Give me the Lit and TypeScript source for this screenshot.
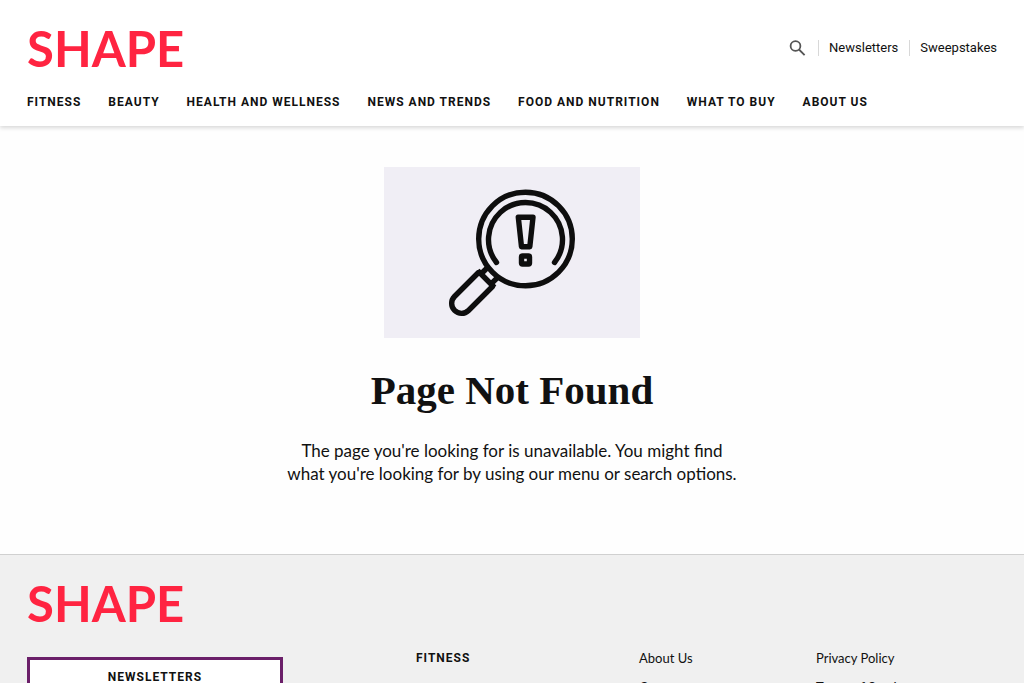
import { LitElement, html, css, svg } from "lit";
import { customElement, property } from "lit/decorators.js";

const SECTIONS = [
  "Fitness",
  "Beauty",
  "Health and Wellness",
  "News and Trends",
  "Food and Nutrition",
  "What to Buy",
  "About Us",
];
const UTILITY = ["Newsletters", "Sweepstakes"];
const COMPANY = ["About Us", "Careers"];
const LEGAL = ["Privacy Policy", "Terms of Service"];

@customElement("shape-logo")
export class ShapeLogo extends LitElement {
  static styles = css`
    :host {
      display: block;
    }
    .logo {
      display: block;
      color: #ff2441;
      font: 700 49px/42px Lato, sans-serif;
      text-decoration: none;
    }
  `;
  render() {
    return html`<a class="logo" href="#">SHAPE</a>`;
  }
}

@customElement("shape-header")
export class ShapeHeader extends LitElement {
  static styles = css`
    :host {
      display: block;
      background: #fff;
      box-shadow: 0 2px 4px rgba(0, 0, 0, 0.15);
    }
    .top {
      display: flex;
      align-items: center;
      justify-content: space-between;
      padding: 27px 27px 0;
    }
    .utility {
      display: flex;
      align-items: center;
    }
    .search {
      display: flex;
      padding: 0;
      margin-right: 12px;
      border: 0;
      background: none;
      cursor: pointer;
    }
    .utility-link {
      padding-left: 10px;
      margin-left: 11px;
      border-left: 1px solid #d8d8d8;
      color: #111;
      font-family: Roboto, sans-serif;
      font-size: 13px;
      line-height: 16px;
      text-decoration: none;
    }
    .search + .utility-link {
      margin-left: 0;
    }
    .nav {
      display: flex;
      flex-wrap: wrap;
      gap: 8px 27px;
      padding: 25px 27px 16px;
    }
    .nav-link {
      color: #111;
      font-family: Roboto, sans-serif;
      font-size: 12px;
      font-weight: 700;
      line-height: 16px;
      letter-spacing: 1px;
      text-transform: uppercase;
      text-decoration: none;
    }
  `;
  render() {
    return html`
      <div class="top">
        <shape-logo></shape-logo>
        <div class="utility">
          <button class="search" type="button" aria-label="Search">
            <svg width="17" height="17" viewBox="0 0 17 17" fill="none" stroke="#555" stroke-width="1.8">
              <circle cx="6.5" cy="6" r="4.9" />
              <path d="M10 9.5 L15.6 15.1" />
            </svg>
          </button>
          ${UTILITY.map((t) => html`<a class="utility-link" href="#">${t}</a>`)}
        </div>
      </div>
      <nav class="nav">${SECTIONS.map((t) => html`<a class="nav-link" href="#">${t}</a>`)}</nav>
    `;
  }
}

const magnifier = svg`
  <rect width="256" height="171" fill="#f0eef5" />
  <g fill="none" stroke="#0e0e0e" stroke-width="5.4" stroke-linecap="round" stroke-linejoin="round">
    <circle cx="141.5" cy="72" r="46.8" />
    <path d="M112.5 95.5 A37 37 0 1 1 170.5 95.5" />
    <path d="M134.3 50.3 H149 L145.8 79.8 H137.5 Z" />
    <rect x="137.5" y="89" width="8" height="8" rx="1" />
    <path d="M94.5 105.5 L70.5 129.5 A9.9 9.9 0 0 0 84.5 143.5 L108.5 119.5" />
    <path d="M95.5 105.5 L108.5 118.5 M103 101 L99.5 104.5 M113 111 L109.5 114.5" stroke-linecap="square" />
  </g>`;

@customElement("not-found")
export class NotFound extends LitElement {
  static styles = css`
    :host {
      display: flex;
      flex-direction: column;
      align-items: center;
      padding: 41px 27px 69px;
      text-align: center;
      color: #111;
    }
    .art {
      display: block;
      width: 256px;
    }
    .title {
      margin: 24px 0 21px;
      font: 700 41px/56px "Liberation Serif", serif;
    }
    .message {
      max-width: 456px;
      margin: 0;
      font-size: 17px;
      line-height: 23px;
    }
  `;
  render() {
    return html`
      <svg class="art" viewBox="0 0 256 171" aria-hidden="true">${magnifier}</svg>
      <h1 class="title">Page Not Found</h1>
      <p class="message">
        The page you're looking for is unavailable. You might find what you're looking for by using our menu or search
        options.
      </p>
    `;
  }
}

@customElement("link-column")
export class LinkColumn extends LitElement {
  @property({ attribute: false }) links: string[] = [];
  @property({ type: Boolean }) strong = false;

  static styles = css`
    :host {
      display: block;
    }
    .list {
      display: grid;
      gap: 13px;
      margin: 0;
      padding: 0;
      list-style: none;
    }
    .link {
      display: block;
      color: #111;
      font-size: 13px;
      line-height: 16px;
      text-decoration: none;
    }
    .strong {
      font-family: Roboto, sans-serif;
      font-size: 12px;
      font-weight: 700;
      letter-spacing: 1px;
      text-transform: uppercase;
    }
  `;
  render() {
    return html`<ul class="list">
      ${this.links.map((t) => html`<li><a class="link ${this.strong ? "strong" : ""}" href="#">${t}</a></li>`)}
    </ul>`;
  }
}

@customElement("shape-footer")
export class ShapeFooter extends LitElement {
  static styles = css`
    :host {
      display: block;
      padding: 27px;
      border-top: 1px solid #d0d0d0;
      background: #f0f0f0;
    }
    .columns {
      display: grid;
      grid-template-columns: 389fr 223fr 177fr 181fr;
      margin-top: 26px;
    }
    .newsletters {
      box-sizing: border-box;
      width: 256px;
      max-width: 100%;
      margin-top: 7px;
      padding: 9px;
      border: 3px solid #6b1f69;
      background: #fff;
      color: #111;
      font: 700 12px/16px Roboto, sans-serif;
      letter-spacing: 1px;
      text-align: center;
      text-decoration: none;
      text-transform: uppercase;
      justify-self: start;
      align-self: start;
    }
  `;
  render() {
    return html`
      <shape-logo></shape-logo>
      <div class="columns">
        <a class="newsletters" href="#">Newsletters</a>
        <link-column strong .links=${SECTIONS.slice(0, 1)}></link-column>
        <link-column .links=${COMPANY}></link-column>
        <link-column .links=${LEGAL}></link-column>
      </div>
    `;
  }
}

@customElement("app-root")
export class AppRoot extends LitElement {
  static styles = css`
    :host {
      display: block;
      min-height: 100vh;
      background: #fefefe;
      font-family: Lato, sans-serif;
    }
  `;
  render() {
    return html`
      <shape-header></shape-header>
      <main><not-found></not-found></main>
      <shape-footer></shape-footer>
    `;
  }
}
